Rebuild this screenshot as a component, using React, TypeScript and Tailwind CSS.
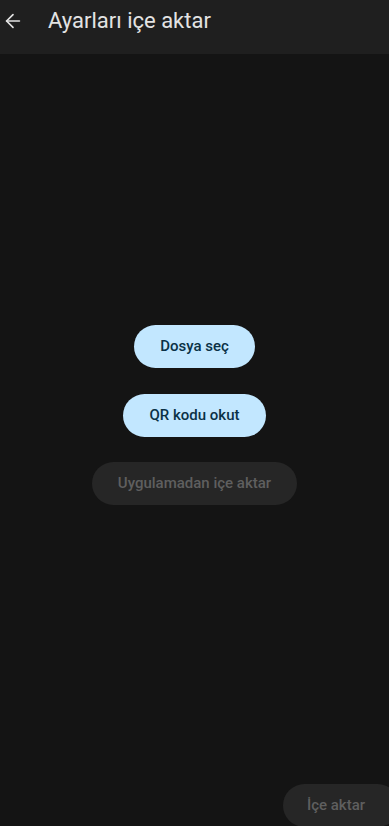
import { ArrowLeft } from "lucide-react";

export default function App() {
  return (
    <div
      className="relative flex h-[826px] w-full flex-col overflow-hidden bg-[#141414]"
      style={{ fontFamily: "Roboto, 'Noto Sans', sans-serif" }}
    >
      {/* Top bar */}
      <div className="flex h-[54px] items-center bg-[#1f1f1f] pb-[12px]">
        <button className="flex w-[48px] items-center pl-[2px] text-[#e3e3e3]">
          <ArrowLeft size={22} strokeWidth={1.8} />
        </button>
        <h1 className="text-[22px] leading-none text-[#e3e3e3]">
          Ayarları içe aktar
        </h1>
      </div>

      {/* Actions */}
      <div className="flex flex-1 flex-col items-center pt-[271px]">
        <button className="h-[43px] rounded-full bg-[#c2e7ff] px-[26px] text-[15px] font-medium text-[#0a3146]">
          Dosya seç
        </button>
        <button className="mt-[26px] h-[43px] rounded-full bg-[#c2e7ff] px-[26px] text-[15px] font-medium text-[#0a3146]">
          QR kodu okut
        </button>
        <button
          disabled
          className="mt-[25px] h-[43px] rounded-full bg-[#262626] px-[26px] text-[15px] font-medium text-[#5f5f5f]"
        >
          Uygulamadan içe aktar
        </button>
      </div>

      {/* Bottom import button */}
      <button
        disabled
        className="absolute left-[283px] top-[784px] h-[43px] w-[116px] rounded-full bg-[#262626] pr-[10px] text-[15px] font-medium text-[#5f5f5f]"
      >
        İçe aktar
      </button>
    </div>
  );
}
